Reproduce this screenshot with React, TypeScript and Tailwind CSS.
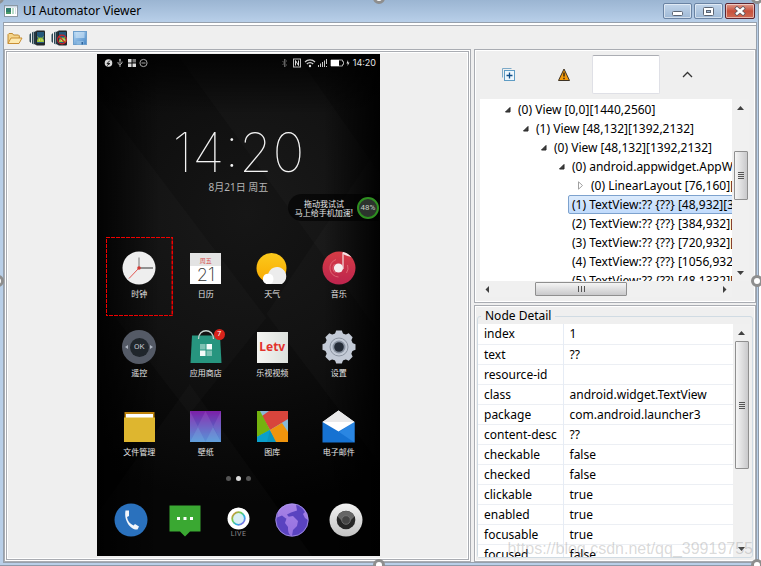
import type { ReactNode } from "react";

const FONT = "font-['Noto_Sans','Noto_Sans_CJK_SC',sans-serif]";

const TREE: { pad: string; arrow: "open" | "closed" | "none"; text: string; selected?: boolean }[] = [
  { pad: "pl-[21px]", arrow: "open", text: "(0) View [0,0][1440,2560]" },
  { pad: "pl-[39px]", arrow: "open", text: "(1) View [48,132][1392,2132]" },
  { pad: "pl-[57px]", arrow: "open", text: "(0) View [48,132][1392,2132]" },
  { pad: "pl-[75px]", arrow: "open", text: "(0) android.appwidget.AppWidgetHostView" },
  { pad: "pl-[94px]", arrow: "closed", text: "(0) LinearLayout [76,160][1364,520]" },
  { pad: "pl-[88px]", arrow: "none", text: "(1) TextView:?? {??} [48,932][384,1332]", selected: true },
  { pad: "pl-[88px]", arrow: "none", text: "(2) TextView:?? {??} [384,932][720,1332]" },
  { pad: "pl-[88px]", arrow: "none", text: "(3) TextView:?? {??} [720,932][1056,1332]" },
  { pad: "pl-[88px]", arrow: "none", text: "(4) TextView:?? {??} [1056,932][1392,1332]" },
  { pad: "pl-[88px]", arrow: "none", text: "(5) TextView:?? {??} [48,1332][384,1732]" },
];

const DETAILS: [string, string][] = [
  ["index", "1"],
  ["text", "??"],
  ["resource-id", ""],
  ["class", "android.widget.TextView"],
  ["package", "com.android.launcher3"],
  ["content-desc", "??"],
  ["checkable", "false"],
  ["checked", "false"],
  ["clickable", "true"],
  ["enabled", "true"],
  ["focusable", "true"],
  ["focused", "false"],
];

function WindowIcon() {
  return (
    <svg width="14" height="12" viewBox="0 0 14 12" aria-hidden="true">
      <rect x=".5" y=".5" width="13" height="11" fill="#fff" stroke="#8b97a4" />
      <rect x="1" y="1" width="12" height="1.5" fill="#c9d6e2" />
      <rect x="2" y="3" width="5" height="6" fill="#2f7d6c" />
      <rect x="2" y="7" width="5" height="2" fill="#4d9a66" />
      <rect x="8" y="3" width="2" height="6" fill="#b7dcc9" />
      <rect x="11" y="3" width="1" height="6" fill="#d5dde5" />
    </svg>
  );
}

function FolderIcon() {
  return (
    <svg width="16" height="14" viewBox="0 0 16 14" aria-hidden="true">
      <path d="M1 12.5V3.5l1-1h3.5l1 1.5h5l.8.8V7" fill="#f5d58c" stroke="#c08a30" />
      <path d="M1 12.5 4 7h11l-3 5.5z" fill="#fde9b0" stroke="#c98f35" strokeLinejoin="round" />
    </svg>
  );
}

function DeviceIcon({ marked = false }: { marked?: boolean }) {
  return (
    <svg width="16" height="16" viewBox="0 0 16 16" aria-hidden="true">
      <path d="M2 3 .5 4.500v7L2 13zM4.500 1.500 3 2.500v11l1.500 1z" fill="#2b4654" />
      <path d="M7 1 5 2v12l2 1z" fill="#243844" />
      <rect x="7" y=".5" width="9" height="15" rx="1" fill="#23272b" />
      <rect x="8" y="2" width="7" height="11" fill="#24597c" />
      <path d="M8 12a3.500 4.500 0 0 1 7 0z" fill="#a4c639" />
      <path d="m9.500 8-1-1.500M13.500 8l1-1.500" stroke="#a4c639" strokeWidth=".8" />
      <path d="M10 10h1M12.500 10h1" stroke="#fff" strokeWidth=".8" />
      {marked && (
        <g fill="none" stroke="#d62027" strokeWidth="1.100">
          <circle cx="11" cy="9.500" r="4.400" />
          <path d="m8 6.500 6 6" />
        </g>
      )}
    </svg>
  );
}

function SaveIcon() {
  return (
    <svg width="14" height="14" viewBox="0 0 14 14" aria-hidden="true">
      <defs>
        <linearGradient id="disk" x1="0" y1="0" x2="1" y2="1">
          <stop offset="0" stopColor="#b9daf5" />
          <stop offset="1" stopColor="#4686c6" />
        </linearGradient>
      </defs>
      <rect x=".5" y=".5" width="13" height="13" fill="url(#disk)" stroke="#6f9fcb" />
      <rect x="2.500" y="1" width="9" height="6" fill="#cfe5f7" opacity=".6" />
      <rect x="3.500" y="10" width="7" height="3.500" fill="#8cb9e0" />
      <rect x="8.500" y="11" width="1.500" height="2.500" fill="#2c639c" />
    </svg>
  );
}

function Arrow({ dir }: { dir: "up" | "down" | "left" | "right" }) {
  const d = { up: "M0 6 3.500 2 7 6z", down: "M0 2 3.500 6 7 2z", left: "M5 0v7L1.500 3.500z", right: "M2 0v7l3.500-3.500z" }[dir];
  return (
    <svg className="w-[7px]" viewBox="0 0 7 7" aria-hidden="true">
      <path d={d} fill="#404040" />
    </svg>
  );
}

function TreeArrow({ kind }: { kind: "open" | "closed" | "none" }) {
  if (kind === "none") return null;
  return (
    <svg className="w-[14px] shrink-0" height="9" viewBox="0 0 14 9" aria-hidden="true">
      {kind === "open" ? (
        <path d="M9 2.500v4.500H4.500z" fill="#404040" stroke="#262626" strokeLinejoin="round" />
      ) : (
        <path d="M4.500.8v7.400l4-3.700z" fill="#fff" stroke="#a0a0a0" />
      )}
    </svg>
  );
}

/* ---------- phone screen ---------- */

function StatusBar() {
  return (
    <div className="flex h-[17px] items-center justify-between pl-[7px] pr-1 text-[#e4e4e4]">
      <svg width="46" height="10" viewBox="0 0 46 10" aria-hidden="true">
        <circle cx="4.500" cy="5" r="3.800" fill="#d8d8d8" />
        <path d="m6 2.500-3 3h3l-3 2" fill="none" stroke="#222" />
        <path d="M16 1v8M14 4v1.500l2 1.500 2-2V3.500" fill="none" stroke="#aaa" />
        <path d="m14.800 2.500 1.200-2 1.200 2z" fill="#aaa" />
        <path d="M24 1h3.500v3.500H24zM24 5.500h3.500V9H24zM28.500 5.500H32V9h-3.500z" fill="#d9d9d9" />
        <path d="M28.500 1H32v3.500h-3.500z" fill="#777" />
        <circle cx="39.500" cy="5" r="3.600" fill="none" stroke="#a5a5a5" />
        <path d="M37.500 5h4" stroke="#a5a5a5" />
      </svg>
      <div className="flex items-center gap-[3px]">
        <svg width="71" height="10" viewBox="0 0 71 10" aria-hidden="true">
          <path d="m3.500 3 4 4-2 2V1l2 2-4 4" fill="none" stroke="#626262" />
          <rect x="14.500" y="1" width="7" height="8" fill="none" stroke="#bbb" />
          <path d="M16.500 7.500v-5l3 5v-5" fill="none" stroke="#ddd" />
          <path d="M26 4a7 7 0 0 1 10 0M27.800 6a4.500 4.500 0 0 1 6.400 0" fill="none" stroke="#d0d0d0" strokeWidth="1.200" />
          <circle cx="31" cy="8" r="1.200" fill="#ddd" />
          <path d="M39 7h1v2h-1zM41 5.500h1V9h-1zM43 4h1v5h-1zM45 2.500h1V9h-1zM47 1h1v5h-1zM47 8h1v1h-1z" fill="#c6c6c6" />
          <path d="M52 2h11.500v1.500h1v3h-1V8H52z" fill="none" stroke="#aaa" />
          <path d="M52 2h8v6h-8z" fill="#fff" />
          <path d="m69 2-1.500 3.500h1.300L68.500 8l2-3.500h-1.300z" fill="#ddd" />
        </svg>
        <span className="font-[Inter,sans-serif] text-[9px] leading-[10px]">14:20</span>
      </div>
    </div>
  );
}

function ClockIcon() {
  return (
    <svg width="34" height="34" viewBox="0 0 34 34" aria-hidden="true">
      <circle cx="17" cy="17" r="16.500" fill="#eee" />
      <path d="M17 17V6.500" stroke="#777" strokeWidth="1" />
      <path d="M17 17h14" stroke="#333" strokeWidth="1" />
      <path d="M17 17 7 27.500" stroke="#e25550" strokeWidth="1" />
      <circle cx="17" cy="17" r="1.800" fill="#d33a35" />
    </svg>
  );
}

function CalendarIcon() {
  return (
    <span className="flex h-[31px] w-[31px] flex-col items-center bg-white">
      <span className="flex h-[13px] w-full items-end justify-center bg-[#e3e3e3] text-[6px] leading-[10px] text-[#d84a4a]">周五</span>
      <span className="w-full text-center font-[Inter,sans-serif] text-[18px] font-extralight leading-[18px] text-[#333]">21</span>
    </span>
  );
}

function WeatherIcon() {
  return (
    <svg width="34" height="34" viewBox="0 0 34 34" aria-hidden="true">
      <defs>
        <linearGradient id="sun" x2="0" y2="1">
          <stop offset="0" stopColor="#fbc91c" />
          <stop offset="1" stopColor="#f9a900" />
        </linearGradient>
      </defs>
      <circle cx="16.500" cy="17" r="15" fill="url(#sun)" />
      <path d="M11 33l2-9.500a9.200 9.200 0 1 1 14 9.500z" fill="#ececec" />
      <path d="M11.500 33a5.300 5.300 0 1 1 7-5c0 3-2 5-4 5z" fill="#fff" />
    </svg>
  );
}

function MusicIcon() {
  return (
    <svg width="34" height="34" viewBox="0 0 34 34" aria-hidden="true">
      <defs>
        <linearGradient id="disc" x2="0" y2="1">
          <stop offset="0" stopColor="#d63c45" />
          <stop offset="1" stopColor="#bd244e" />
        </linearGradient>
      </defs>
      <circle cx="17" cy="17" r="16.500" fill="url(#disc)" />
      <path d="M14 8.500a9 9 0 0 0 2.500 17.500M25.500 14a9 9 0 0 1-1 8M12.500 13a6 6 0 0 0 1 9" fill="none" stroke="#e2717b" strokeWidth=".8" />
      <circle cx="16.500" cy="17" r="4.600" fill="#f5eeee" />
      <path d="M21 18V1.500" fill="none" stroke="#f5dfe1" strokeWidth="1.200" />
      <path d="M21 1c3 .5 6.500 2.500 8.500 5.500-2.500-1.500-5-1.500-8.500-3.500z" fill="#f5dfe1" />
    </svg>
  );
}

function RemoteIcon() {
  return (
    <span className="flex h-[34px] w-[34px] items-center justify-between rounded-full bg-[#545a66] px-[3px] text-[#aeb5c1]">
      <svg width="3" height="4" viewBox="0 0 3 4" aria-hidden="true"><path d="M3 0v4L0 2z" fill="currentColor" /></svg>
      <span className="flex h-[19px] w-[19px] items-center justify-center rounded-full bg-[#20262c] font-[Roboto,sans-serif] text-[8px] leading-none text-[#c3c7cc]">OK</span>
      <svg width="3" height="4" viewBox="0 0 3 4" aria-hidden="true"><path d="M0 0v4l3-2z" fill="currentColor" /></svg>
    </span>
  );
}

function StoreIcon() {
  return (
    <span className="relative flex h-[34px] w-[34px] items-center justify-center">
      <svg width="34" height="34" viewBox="0 0 34 34" aria-hidden="true">
        <path d="M3 5.500h28L32.500 33h-31z" fill="#27957f" />
        <path d="M9.500 9c0-11 15-11 15 0" fill="none" stroke="#c7d6d1" strokeWidth="1.300" />
        <path d="M11 14h5.500v5.500H11zM17.500 20.500H23V26h-5.500z" fill="#7fc2b3" />
        <path d="M17.500 14H23v5.500h-5.500zM11 20.500h5.500V26H11z" fill="#f4fbf9" />
      </svg>
      <span className="absolute -right-[2px] -top-px flex h-[11px] w-[11px] items-center justify-center rounded-full bg-[#d8231b] font-[Roboto,sans-serif] text-[7px] leading-none text-white">7</span>
    </span>
  );
}

function LetvIcon() {
  return (
    <span className="flex h-[31px] w-[31px] items-center justify-center bg-linear-to-r from-[#f5f5f2] to-[#dde1dd] font-['Noto_Sans',sans-serif] text-[12px] font-bold leading-none text-[#e2332c]">
      Letv
    </span>
  );
}

function GearIcon() {
  const teeth = [0, 45, 90, 135, 180, 225, 270, 315];
  return (
    <svg width="34" height="34" viewBox="0 0 34 34" aria-hidden="true">
      <g fill="#c3cad6">
        {teeth.map((a) => (
          <path key={a} d="M12.500 5 14.200.5h5.600L21.500 5z" transform={`rotate(${a} 17 17)`} />
        ))}
        <circle cx="17" cy="17" r="14" />
      </g>
      <circle cx="17" cy="17" r="9" fill="none" stroke="#8d95a2" />
      <circle cx="17" cy="17" r="6.500" fill="#8a93a1" />
      <circle cx="17" cy="17" r="4.800" fill="#252c37" />
    </svg>
  );
}

function FilesIcon() {
  return (
    <svg width="31" height="31" viewBox="0 0 31 31" aria-hidden="true">
      <path d="M.5 1h30v8H.5z" fill="#bd820b" />
      <path d="M2 3h27v6H2z" fill="#fff" />
      <path d="M0 6.500h31V31H0z" fill="#deb62f" />
    </svg>
  );
}

function WallpaperIcon() {
  return (
    <svg width="31" height="31" viewBox="0 0 31 31" aria-hidden="true">
      <defs>
        <linearGradient id="wall" x2="0" y2="1">
          <stop offset="0" stopColor="#7d1fa9" />
          <stop offset="1" stopColor="#3f91d2" />
        </linearGradient>
      </defs>
      <path d="M0 0h31v31H0z" fill="url(#wall)" />
      <path d="M0 0v31L8 16zM15.500 0 0 31h31zM31 0v31l-8-15z" fill="#e0a0f0" opacity=".15" />
      <path d="m0 31 8-15 7.500 15zM15.500 31 23 16l8 15z" fill="#8ad0f0" opacity=".2" />
    </svg>
  );
}

function GalleryIcon() {
  return (
    <svg width="31" height="31" viewBox="0 0 31 31" aria-hidden="true">
      <path d="M0 0h31v31H0z" fill="#89b9d6" />
      <path d="M12 0h19v8L13 19 5 5z" fill="#d8453c" />
      <path d="M0 0h3l10 19L0 26z" fill="#74b30f" />
      <path d="m0 26 13-7 7 12H0z" fill="#0b95bd" />
      <path d="m13 19 12-7 6 9v10H19z" fill="#ef940d" />
      <path d="m13 19-3 12H0v-5z" fill="#0aa0cc" />
    </svg>
  );
}

function MailIcon() {
  return (
    <svg width="33" height="33" viewBox="0 0 33 33" aria-hidden="true">
      <path d="M.5 12h32v20.500H.5z" fill="#1672d2" />
      <path d="m17 22 15.500-10v20.500z" fill="#2a86e2" />
      <path d="M.5 12 16.500.5l16 11.500-16 9.500z" fill="#fff" />
      <path d="M.5 12 16.500.5l16 11.500z" fill="#e9e9ea" />
    </svg>
  );
}

const APPS: { label: string; icon: ReactNode; active?: boolean }[] = [
  { label: "时钟", icon: <ClockIcon />, active: true },
  { label: "日历", icon: <CalendarIcon /> },
  { label: "天气", icon: <WeatherIcon /> },
  { label: "音乐", icon: <MusicIcon /> },
  { label: "遥控", icon: <RemoteIcon /> },
  { label: "应用商店", icon: <StoreIcon /> },
  { label: "乐视视频", icon: <LetvIcon /> },
  { label: "设置", icon: <GearIcon /> },
  { label: "文件管理", icon: <FilesIcon /> },
  { label: "壁纸", icon: <WallpaperIcon /> },
  { label: "图库", icon: <GalleryIcon /> },
  { label: "电子邮件", icon: <MailIcon /> },
];

function Dock() {
  return (
    <div className="flex h-[34px] justify-around px-[7px]">
      <svg width="34" height="34" viewBox="0 0 34 34" aria-hidden="true">
        <circle cx="17" cy="17" r="16.500" fill="#2a71bd" />
        <path d="M11.500 7.500h3.500v5.500l-2 1c.5 4 3 7 6.500 8.500l1.500-1.500 4 2.500-1.500 3c-6 1-14-8-12-19z" fill="#f3f6fa" />
      </svg>
      <svg width="34" height="34" viewBox="0 0 34 34" aria-hidden="true">
        <path d="M1.500 2.500h31v26H22l-5 5-5-5H1.500z" fill="#3aa832" />
        <path d="M9 14h3v3H9zM15.500 14h3v3h-3zM22 14h3v3h-3z" fill="#fff" />
      </svg>
      <span className="flex w-[34px] flex-col items-center pt-1 font-[Roboto,sans-serif] text-[7px] leading-[8px] tracking-wider text-[#8c8c8c]">
        <svg width="23" height="23" viewBox="0 0 23 23" className="shrink-0" aria-hidden="true">
          <defs>
            <linearGradient id="ring" x2="1" y2="1">
              <stop offset="0" stopColor="#f08030" />
              <stop offset=".35" stopColor="#6fcf55" />
              <stop offset=".65" stopColor="#27b5ea" />
              <stop offset="1" stopColor="#b04be0" />
            </linearGradient>
          </defs>
          <circle cx="11.500" cy="11.500" r="11" fill="#fff" />
          <circle cx="11.500" cy="11.500" r="6.300" fill="#d9eff5" stroke="url(#ring)" strokeWidth="1.800" />
        </svg>
        LIVE
      </span>
      <svg width="34" height="34" viewBox="0 0 34 34" aria-hidden="true">
        <defs>
          <linearGradient id="sea" x2="0" y2="1">
            <stop offset="0" stopColor="#a783e6" />
            <stop offset="1" stopColor="#9570e0" />
          </linearGradient>
        </defs>
        <circle cx="17" cy="17" r="16.500" fill="#5a43c0" />
        <path d="M3 9C7 2 14 0 21 1.500l1 6-6 2-4 2 2 3-3 1-4-3-5 2zM12 14l6-1 5 5-1 5-4 4-1 6c-4-1-4-6-4-9l-3-4zM27 5c4 3 6 7 6 12l-3-2-2-4 2-2z" fill="url(#sea)" />
        <circle cx="17" cy="17" r="16.200" fill="none" stroke="#b9a6ea" strokeWidth=".7" />
      </svg>
      <svg width="34" height="34" viewBox="0 0 34 34" aria-hidden="true">
        <defs>
          <linearGradient id="cam" x2="0" y2="1">
            <stop offset="0" stopColor="#f2f2f2" />
            <stop offset="1" stopColor="#c3c3c3" />
          </linearGradient>
        </defs>
        <circle cx="17" cy="17" r="16.500" fill="url(#cam)" />
        <circle cx="17" cy="17" r="9.300" fill="#262626" />
        <path d="M8.500 13.500a9.300 9.300 0 0 1 17 0L20 19h-6z" fill="#666" />
        <circle cx="17" cy="17" r="4.300" fill="#444" stroke="#777" strokeWidth=".8" />
      </svg>
    </div>
  );
}

function Phone() {
  return (
    <div className="relative isolate flex h-[502px] w-[283px] shrink-0 flex-col overflow-hidden bg-[#060606]">
      <svg className="absolute inset-0 -z-10 h-full w-full" viewBox="0 0 284 502" preserveAspectRatio="none" aria-hidden="true">
        <defs>
          <radialGradient id="glow" gradientUnits="userSpaceOnUse" cx="150" cy="160" r="290">
            <stop offset="0" stopColor="#161616" />
            <stop offset=".5" stopColor="#0e0e0e" />
            <stop offset="1" stopColor="#020202" />
          </radialGradient>
          <linearGradient id="edge">
            <stop offset="0" stopColor="#000" stopOpacity=".85" />
            <stop offset=".22" stopColor="#000" stopOpacity="0" />
            <stop offset=".8" stopColor="#000" stopOpacity="0" />
            <stop offset="1" stopColor="#000" stopOpacity=".9" />
          </linearGradient>
          <linearGradient id="top" x2="0" y2="1">
            <stop offset="0" stopColor="#000" stopOpacity=".8" />
            <stop offset=".12" stopColor="#000" stopOpacity="0" />
          </linearGradient>
        </defs>
        <path d="M0 0h284v502H0z" fill="url(#glow)" />
        <path d="M0 40 170 264 93 360 0 240zM80 0l204 280V120L200 0z" fill="#fff" opacity=".02" />
        <path d="M93 330 216 502H-30zM284 90 170 260l114 150z" fill="#fff" opacity=".02" />
        <path d="M0 0h284v502H0z" fill="url(#edge)" />
        <path d="M0 0h284v502H0z" fill="url(#top)" />
      </svg>
      <StatusBar />
      <div className="mt-[55px] flex flex-col items-center">
        <div className="flex h-[54px] items-center font-[Inter,sans-serif] text-[54px] font-thin leading-none text-[#f4f4f4]">14:20</div>
        <div className="text-[10px] leading-[14px] text-[#b5b5b5]">8月21日 周五</div>
      </div>
      <div className="mr-px flex h-[27px] items-center gap-1 self-end rounded-l-full bg-black/60 pl-[7px]">
        <span className="text-center text-[8px] leading-[9px] text-[#e8e8e8]">
          拖动我试试
          <br />
          马上给手机加速!
        </span>
        <span className="flex h-[22px] w-[22px] items-center justify-center rounded-full border-2 border-[#2e8f20] bg-[#2c332d] font-[Roboto,sans-serif] text-[8px] leading-none text-[#c6cec6]">
          48%
        </span>
      </div>
      <div className="mt-[16px] grid grid-cols-4 pl-[9px] pr-2">
        {APPS.map((app) => (
          <div key={app.label} className="relative flex h-[79px] flex-col items-center pt-[14px]">
            <span className="flex h-[34px] items-center">{app.icon}</span>
            <span className="mt-[3px] text-[8px] leading-[12px] text-[#e6e6e6]">{app.label}</span>
            {app.active && (
              <svg className="absolute inset-0 h-full w-full" aria-hidden="true">
                <rect width="100%" height="100%" fill="none" stroke="#f00000" strokeWidth="2" strokeDasharray="4 1" />
              </svg>
            )}
          </div>
        ))}
      </div>
      <div className="mt-[2px] flex justify-center gap-[5px]">
        <i className="h-[5px] w-[5px] rounded-full bg-[#555]" />
        <i className="h-[5px] w-[5px] rounded-full bg-[#ddd]" />
        <i className="h-[5px] w-[5px] rounded-full bg-[#555]" />
      </div>
      <div className="mb-[19px] mt-auto">
        <Dock />
      </div>
    </div>
  );
}

/* ---------- window parts ---------- */

function Panel({ className, children }: { className: string; children: ReactNode }) {
  return <section className={`border border-[#a9acb2] bg-[#efefef] shadow-[inset_0_0_0_1px_#ffffff] ${className}`}>{children}</section>;
}

function TitleBar() {
  const base = "flex h-4 items-center justify-center rounded-[2px] border shadow-[inset_0_0_0_1px_#ffffff80]";
  return (
    <header className="flex h-[22px] shrink-0 items-center gap-[5px] bg-linear-to-b from-[#9bb5d2] to-[#b8cfe9] pl-1 pr-[3px]">
      <WindowIcon />
      <h1 className="text-[12px] leading-[20px] text-black">UI Automator Viewer</h1>
      <div className="ml-auto flex gap-[2px]">
        <button aria-label="Minimize" className={`${base} w-[29px] border-[#6a83a3] bg-linear-to-b from-[#c2d5ea] to-[#9fb9d6]`}>
          <svg width="11" height="9" viewBox="0 0 11 9" aria-hidden="true"><rect x=".5" y="4.500" width="10" height="4" rx="1" fill="#fff" stroke="#5c6573" /></svg>
        </button>
        <button aria-label="Maximize" className={`${base} w-[29px] border-[#6a83a3] bg-linear-to-b from-[#c2d5ea] to-[#9fb9d6]`}>
          <svg width="11" height="9" viewBox="0 0 11 9" aria-hidden="true">
            <rect x=".5" y=".5" width="10" height="8" rx="1" fill="#fff" stroke="#5c6573" />
            <rect x="3.500" y="3.500" width="4" height="2" fill="#9fb9d6" stroke="#5c6573" />
          </svg>
        </button>
        <button aria-label="Close" className={`${base} w-[30px] border-[#5d2430] bg-linear-to-b from-[#dd9a8c] via-[#c7503c] to-[#cf6a54]`}>
          <svg width="12" height="10" viewBox="0 0 12 10" aria-hidden="true">
            <path d="m3 2.500 6 5M9 2.500l-6 5" stroke="#5f5860" strokeWidth="4" strokeLinecap="square" />
            <path d="m3 2.500 6 5M9 2.500l-6 5" stroke="#fff" strokeWidth="2.400" strokeLinecap="square" />
          </svg>
        </button>
      </div>
    </header>
  );
}

function VerticalBar({ thumb, before }: { thumb: string; before: string }) {
  return (
    <div className="flex w-[17px] shrink-0 flex-col items-center bg-[#f0f0f0]">
      <span className="flex h-[17px] items-center"><Arrow dir="up" /></span>
      <span className={before} />
      <span className={`flex w-[14px] flex-col items-center justify-center gap-px rounded-[1px] border border-[#8f8f8f] bg-linear-to-r from-[#f5f5f5] to-[#c9c9cb] ${thumb}`}>
        <i className="h-px w-[6px] bg-[#555]" />
        <i className="h-px w-[6px] bg-[#555]" />
        <i className="h-px w-[6px] bg-[#555]" />
        <i className="h-px w-[6px] bg-[#555]" />
      </span>
      <span className="mt-auto flex h-[17px] items-center"><Arrow dir="down" /></span>
    </div>
  );
}

function TreePanel() {
  return (
    <Panel className="flex h-[254px] shrink-0 flex-col pb-[5px] pl-[5px] pr-[6px] pt-[5px]">
      <div className="flex h-[39px] shrink-0 items-center">
        <button aria-label="Expand all" className="ml-[22px]">
          <svg width="13" height="13" viewBox="0 0 13 13" aria-hidden="true">
            <path d="M.5 9.500v-9h9" fill="none" stroke="#7daac8" />
            <rect x="2.500" y="2.500" width="10" height="10" fill="#eef7fd" stroke="#5e9cc4" />
            <path d="M4.500 7.500h6M7.500 4.500v6" stroke="#12508a" strokeWidth="1.300" />
          </svg>
        </button>
        <button aria-label="Toggle NAF nodes" className="ml-[43px]">
          <svg width="12" height="13" viewBox="0 0 12 13" aria-hidden="true">
            <path d="M6 1 11.500 12.500H.5z" fill="#f39a0b" stroke="#3d3325" strokeLinejoin="round" />
            <path d="M6 4.500v4M6 9.800v1.400" stroke="#3a2a10" strokeWidth="1.500" />
          </svg>
        </button>
        <input aria-label="Search" className="ml-[22px] h-[39px] w-[68px] rounded-[2px] border border-[#dfe0e6] border-t-[#abadb3] bg-white px-1 text-[12px] outline-none" />
        <button aria-label="Previous" className="ml-[22px]">
          <svg width="11" height="7" viewBox="0 0 11 7" aria-hidden="true">
            <path d="m1 6 4.500-4.500L10 6" fill="none" stroke="#333" strokeWidth="1.300" />
          </svg>
        </button>
      </div>
      <div className="mt-[5px] flex min-h-0 flex-1">
        <ul className="min-w-0 flex-1 overflow-hidden bg-white pt-px text-[12px] leading-[19px] text-black">
          {TREE.map((row) => (
            <li key={row.text} className={`flex h-[19px] items-center whitespace-nowrap ${row.pad}`}>
              <TreeArrow kind={row.arrow} />
              <span
                className={
                  row.selected
                    ? "flex h-[19px] items-center rounded-[2px] border border-[#7da2ce] bg-linear-to-b from-[#dcebfc] to-[#c1dbfc] px-[3px]"
                    : row.arrow === "none"
                      ? "px-1"
                      : "px-[3px]"
                }
              >
                {row.text}
              </span>
            </li>
          ))}
        </ul>
        <VerticalBar before="h-[35px]" thumb="h-[49px]" />
      </div>
      <div className="mr-[17px] flex h-[16px] shrink-0 items-center justify-between bg-[#f0f0f0] px-1">
        <Arrow dir="left" />
        <span className="mr-[50px] flex h-[14px] w-[92px] items-center justify-center gap-px rounded-[1px] border border-[#8f8f8f] bg-linear-to-b from-[#f5f5f5] to-[#c9c9cb]">
          <i className="h-[6px] w-px bg-[#555]" />
          <i className="ml-px h-[6px] w-px bg-[#555]" />
          <i className="ml-px h-[6px] w-px bg-[#555]" />
        </span>
        <Arrow dir="right" />
      </div>
    </Panel>
  );
}

function DetailPanel() {
  return (
    <Panel className="flex min-h-0 flex-1 flex-col px-[2px] pb-[3px]">
      <fieldset className="flex min-h-0 flex-1 flex-col rounded-[3px] border border-[#d0dbe3] pr-[2px]">
        <legend className="ml-[3px] px-1 text-[12px] leading-[20px] text-black">Node Detail</legend>
        <div className="-mt-[2px] flex min-h-0 flex-1 overflow-hidden">
          <div className="min-w-0 flex-1 overflow-hidden bg-white">
            <table className="w-full table-fixed border-collapse text-[12px] leading-[19px] text-black">
              <colgroup>
                <col className="w-[85px]" />
                <col />
              </colgroup>
              <tbody>
                {DETAILS.map(([name, value]) => (
                  <tr key={name} className="h-[20px] border-b border-[#eceff4]">
                    <th scope="row" className="whitespace-nowrap border-r border-[#e6ecf5] p-0 pl-[6px] text-left font-normal">{name}</th>
                    <td className="whitespace-nowrap p-0 pl-[6px]">{value}</td>
                  </tr>
                ))}
              </tbody>
            </table>
          </div>
          <VerticalBar before="h-0" thumb="h-[128px]" />
        </div>
      </fieldset>
    </Panel>
  );
}

function Handle({ place }: { place: string }) {
  return <i className={`absolute h-[12px] w-[12px] rounded-full border-[3px] border-[#8e8e8e] bg-white ${place}`} />;
}

export default function App() {
  return (
    <div className={`relative flex h-screen overflow-hidden bg-white pr-[2px] ${FONT}`}>
      <main className="flex min-w-0 flex-1 flex-col border-b border-r border-[#8d99a8] bg-[#b9cfe8]">
        <TitleBar />
        <div className="mb-[2px] ml-[3px] mr-px flex min-h-0 flex-1 flex-col border border-[#96a0ac] bg-white pt-[2px]">
          <nav className="flex h-[24px] shrink-0 items-center gap-[6px] border-t border-[#a9acb2] bg-[#efefef] pl-[3px]" aria-label="Toolbar">
            <button aria-label="Open" className="w-4"><FolderIcon /></button>
            <button aria-label="Device screenshot" className="w-4"><DeviceIcon /></button>
            <button aria-label="Compressed screenshot" className="w-4"><DeviceIcon marked /></button>
            <button aria-label="Save" className="w-4"><SaveIcon /></button>
          </nav>
          <div className="flex min-h-0 flex-1 gap-[3px] bg-[#efefef]">
            <div className="flex min-w-0 flex-1 border border-[#a9acb2] bg-white p-px">
              <Panel className="flex flex-1 items-start justify-center pl-[2px] pt-[2px]">
                <Phone />
              </Panel>
            </div>
            <div className="flex w-[282px] shrink-0 flex-col gap-[2px]">
              <TreePanel />
              <DetailPanel />
            </div>
          </div>
        </div>
      </main>
      <Handle place="-left-[8px] -top-[8px]" />
      <Handle place="left-[373px] -top-[8px]" />
      <Handle place="right-[-2px] -top-[8px]" />
      <Handle place="-left-[8px] top-[275px]" />
      <Handle place="right-[-2px] top-[275px]" />
      <Handle place="left-[373px] -bottom-[5px]" />
      <Handle place="right-[-2px] -bottom-[5px]" />
      <span className="absolute bottom-[7px] right-[8px] font-['Liberation_Sans',sans-serif] text-[16px] leading-[20px] text-[#808080]/30">
        https://blog.csdn.net/qq_39919755
      </span>
    </div>
  );
}
